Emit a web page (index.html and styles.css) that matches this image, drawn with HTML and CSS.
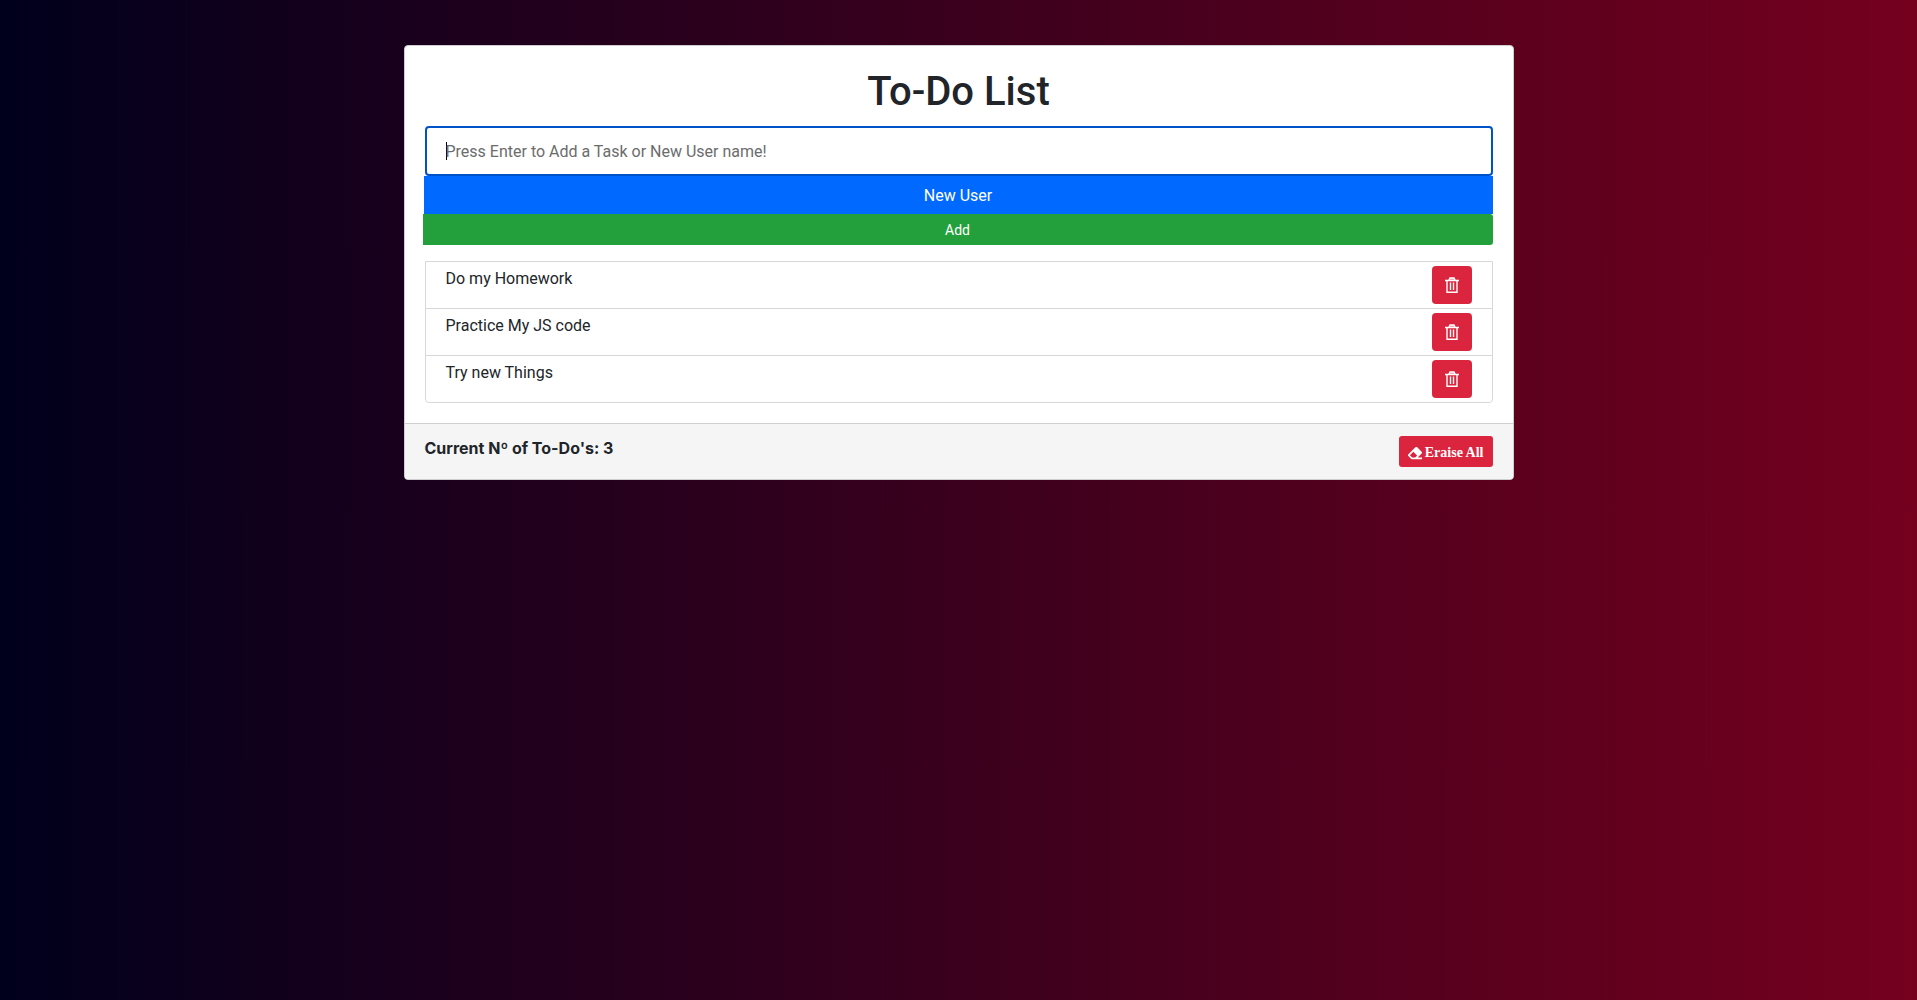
FILE: index.html
```html
<!DOCTYPE html>
<html lang="en">
<head>
<meta charset="utf-8">
<meta name="viewport" content="width=device-width, initial-scale=1">
<title>To-Do List</title>
<link rel="stylesheet" href="styles.css">
</head>
<body>
<svg class="sprite" aria-hidden="true">
  <symbol id="trash" viewBox="0 0 14 16">
    <path d="M0 3.5h14M2 3.5v11.8h10V3.5M4 3l1-2h4l1 2M5.5 5.5v7.5M8.5 5.5v7.5" fill="none" stroke="currentColor" stroke-width="1.4"/>
    <path d="M5 1h4l1 2H4z" fill="currentColor" opacity=".5"/>
  </symbol>
  <symbol id="eraser" viewBox="0 0 512 512">
    <path fill="currentColor" d="M497.941 273.941c18.745-18.745 18.745-49.137 0-67.882l-160-160c-18.745-18.745-49.136-18.746-67.883 0l-256 256c-18.745 18.745-18.745 49.137 0 67.882l96 96A48.004 48.004 0 0 0 144 480h356c6.627 0 12-5.373 12-12v-40c0-6.627-5.373-12-12-12H355.883l142.058-142.059zm-302.627-62.627l137.373 137.373L265.373 416H150.628l-80-80 124.686-124.686z"/>
  </symbol>
</svg>
<main class="card">
  <div class="card-body">
    <h1 class="title">To-Do List</h1>
    <form class="task-form">
      <input class="task-input" type="text" aria-label="Task or user name" placeholder="Press Enter to Add a Task or New User name!" autofocus>
      <button class="btn btn-user" type="button">New User</button>
      <button class="btn btn-add" type="button">Add</button>
    </form>
    <ul class="tasks">
      <li class="task">Do my Homework <button class="btn btn-delete" type="button" aria-label="Delete Do my Homework"><svg class="trash-icon"><use href="#trash"/></svg></button></li>
      <li class="task">Practice My JS code <button class="btn btn-delete" type="button" aria-label="Delete Practice My JS code"><svg class="trash-icon"><use href="#trash"/></svg></button></li>
      <li class="task">Try new Things <button class="btn btn-delete" type="button" aria-label="Delete Try new Things"><svg class="trash-icon"><use href="#trash"/></svg></button></li>
    </ul>
  </div>
  <footer class="card-footer">
    <strong class="count">Current Nº of To-Do's: 3</strong>
    <button class="btn btn-erase" type="button"><svg class="eraser-icon" aria-hidden="true"><use href="#eraser"/></svg>Eraise All</button>
  </footer>
</main>
</body>
</html>
```
FILE: styles.css
```css
* {
  box-sizing: border-box;
}

body {
  min-height: 100vh;
  margin: 0;
  padding: 45px 16px;
  background: linear-gradient(to right, #00001c, #74001e);
  color: #212529;
  font: 16px/24px Roboto, "Liberation Sans", sans-serif;
}

.sprite {
  display: none;
}

.card {
  max-width: 1110px;
  margin: 0 auto;
  overflow: hidden;
  background: #fff;
  border: 1px solid #d0cdd0;
  border-radius: 4px;
}

.card-body {
  padding: 20px;
}

.title {
  margin: 0 0 8px;
  font-size: 40px;
  line-height: 52px;
  font-weight: 500;
  text-align: center;
}

.task-form {
  display: flex;
  flex-direction: column;
  margin-bottom: 16px;
}

.task-input {
  height: 50px;
  padding: 0 19px;
  background: #fff;
  border: 2px solid #0052c8;
  border-radius: 4px;
  outline: 0;
  color: #212529;
  font: inherit;
}

/* Steady caret while the field is empty */
.task-input:placeholder-shown {
  background: linear-gradient(#000, #000) 19px 14px / 1px 18px no-repeat #fff;
  caret-color: transparent;
}

.task-input::placeholder {
  color: #6c6c6c;
  opacity: 1;
}

.btn {
  padding: 0;
  border: 0;
  color: #fff;
  font: inherit;
  cursor: pointer;
}

.btn-user {
  height: 38px;
  margin-left: -1px;
  padding-top: 2px;
  background: #0069ff;
}

.btn-add {
  height: 31px;
  margin-left: -2px;
  background: #23a03b;
  border-radius: 0 3px 3px 0;
  font-size: 14px;
}

.tasks {
  margin: 0;
  padding: 0;
  list-style: none;
  border: 1px solid #d8d8d8;
  border-radius: 0 0 4px 4px;
}

.task {
  display: flex;
  justify-content: space-between;
  padding: 4px 20px;
  line-height: 26px;
}

.task + .task {
  border-top: 1px solid #d8d8d8;
}

.btn-delete {
  display: grid;
  place-items: center;
  width: 40px;
  height: 38px;
  background: #db253e;
  border-radius: 4px;
}

.trash-icon {
  width: 14px;
  height: 16px;
}

.card-footer {
  display: flex;
  justify-content: space-between;
  padding: 12px 20px;
  background: #f5f5f5;
  border-top: 1px solid #d0d0d0;
}

.count {
  font-family: Inter, "Liberation Sans", sans-serif;
  font-weight: 700;
}

.btn-erase {
  display: flex;
  align-items: center;
  gap: 3px;
  height: 31px;
  padding: 2px 9px 0;
  background: #db253e;
  border-radius: 3px;
  font-family: "Liberation Serif", serif;
  font-size: 14px;
  font-weight: 700;
}

.eraser-icon {
  width: 14px;
  height: 14px;
}
```
